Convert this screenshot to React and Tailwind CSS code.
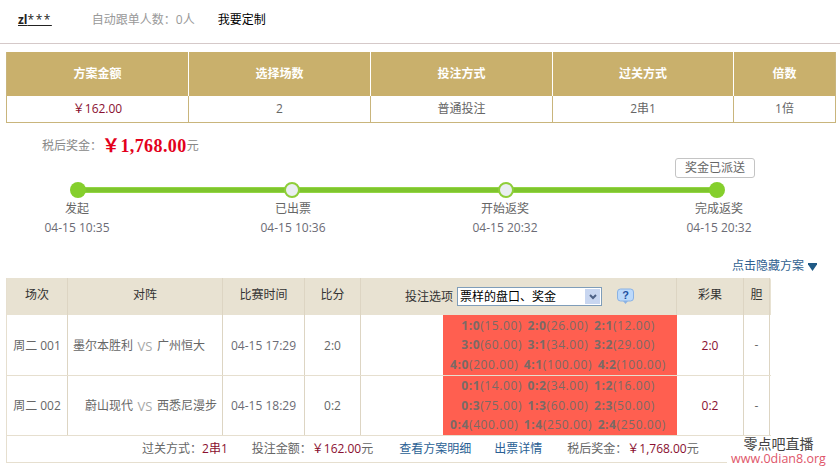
const F = "font-['Open_Sans','Noto_Sans_CJK_SC',sans-serif]";

function Step({ label, time, hollow, cls, labelCls }) {
  return (
    <div className={`flex flex-col items-center w-[72px] ${cls}`}>
      <div className={`w-4 h-4 rounded-full z-10 ${hollow ? 'bg-[#eaeef2] border-2 border-[#8fce3a]' : 'bg-[#85cf2c]'}`} />
      <div className={`text-[12px] leading-[16px] mt-[3px] text-[#666] whitespace-nowrap ${labelCls}`}>{label}</div>
      <div className={`text-[12px] leading-[16px] mt-[3px] text-[#6b6b75] whitespace-nowrap ${labelCls}`}>{time}</div>
    </div>
  );
}

const Odd = ({ k, v }) => (
  <span className="whitespace-nowrap"><b>{k}</b>({v})</span>
);

function Odds({ lines }) {
  return (
    <div className="bg-[#ff5f50] h-full flex flex-col justify-center items-center pr-[4px] text-[#7a6a66] text-[12px] leading-[19.5px] tracking-[0.6px]">
      {lines.map((l, i) => (
        <div key={i} className="flex gap-[5.5px]">
          {l.map(o => <Odd key={o[0]} k={o[0]} v={o[1]} />)}
        </div>
      ))}
    </div>
  );
}

const cols = "grid grid-cols-[61px_155px_82px_56px_82px_234px_67px_26px]";
const cellB = "border-r border-[#ddd5c3]";

function Row({ day, a, b, time, score, lines, h }) {
  return (
    <div className={`${cols} border-b border-[#e6dfcf] ${h} text-[12px] text-[#666]`}>
      <div className={`${cellB} flex items-center justify-center whitespace-nowrap pt-[1px]`}>{day}</div>
      <div className={`${cellB} flex items-center whitespace-nowrap pt-[1px]`}>
        <span className="w-[65px] text-right">{a}</span>
        <span className="text-[#a8a8a8] w-[24px] text-center text-[13px] pt-[2px]">VS</span>
        <span>{b}</span>
      </div>
      <div className={`${cellB} flex items-center justify-center text-[#6b6b75] pt-[1px]`}>{time}</div>
      <div className={`${cellB} flex items-center justify-center pt-[1px]`}>{score}</div>
      <div />
      <Odds lines={lines} />
      <div className={`${cellB} flex items-center justify-center text-[#8a1030] pt-[1px]`}>{score}</div>
      <div className={`${cellB} flex items-center justify-center`}>-</div>
    </div>
  );
}

export default function App() {
  return (
    <div className={`w-[840px] h-[472px] bg-white overflow-hidden relative ${F}`}>
      <div className="h-[44px] border-b border-[#d5c9c9] flex items-center text-[12px] pb-[3px]">
        <span className="ml-[18px] font-bold underline text-[#222]">zl<span className="font-normal tracking-[1.5px]">***</span></span>
        <span className="ml-[40px] text-[#999]">自动跟单人数：0人</span>
        <span className="ml-[23px] text-black">我要定制</span>
      </div>

      <div className="ml-[6px] mt-[8px] w-[830px] border-b border-r border-l border-[#c9b57c]">
        <div className="grid grid-cols-[182px_182px_182px_181px_101px] h-[44px] bg-[#c9b06c] text-white font-bold text-[12px]">
          {["方案金额", "选择场数", "投注方式", "过关方式", "倍数"].map((t, i) => (
            <div key={t} className={`flex items-center justify-center ${i < 4 ? 'border-r border-white' : ''}`}>{t}</div>
          ))}
        </div>
        <div className="grid grid-cols-[182px_182px_182px_181px_101px] h-[26px] text-[12px] text-[#666]">
          <div className="flex items-center justify-center border-r border-[#c9b57c] text-[#8a1030]">￥162.00</div>
          <div className="flex items-center justify-center border-r border-[#c9b57c]">2</div>
          <div className="flex items-center justify-center border-r border-[#c9b57c]">普通投注</div>
          <div className="flex items-center justify-center border-r border-[#c9b57c]">2串1</div>
          <div className="flex items-center justify-center">1倍</div>
        </div>
      </div>

      <div className="ml-[42px] mt-[12px] h-[22px] flex items-center text-[12px] text-[#888]">
        税后奖金：
        <span className="font-['Liberation_Serif','Noto_Sans_CJK_SC',serif] font-bold text-[18px] text-[#e3001b] leading-none tracking-[0.4px]">￥1,768.00</span>
        元
      </div>

      <div className="relative h-[66px] mt-[25px] ml-[42px] w-[711px]">
        <div className="absolute left-[36px] right-[36px] top-[5px] h-[6px] bg-[#7fc52e] border-y border-[#93d645]" />
        <div className="flex relative">
          <Step cls="mr-[142px]" labelCls="-ml-[2px]" label="发起" time="04-15 10:35" />
          <Step cls="mr-[142px]" labelCls="ml-[2px]" hollow label="已出票" time="04-15 10:36" />
          <Step cls="mr-[139px]" labelCls="-ml-[2px]" hollow label="开始返奖" time="04-15 20:32" />
          <Step cls="" labelCls="ml-[4px]" label="完成返奖" time="04-15 20:32" />
        </div>
      </div>
      <div className="absolute left-[675px] top-[158px] w-[80px] h-[20px] border border-[#c4c4c4] rounded-[3px] flex items-center justify-center text-[12px] text-[#666]">奖金已派送</div>

      <div className="h-[24px] mt-[6px] pr-[23px] flex items-center justify-end text-[12px] text-[#2f5f8f]">
        点击隐藏方案
        <svg width="9" height="8" viewBox="0 0 9 8" className="ml-[4px] mt-[2px]"><path d="M0 0h9v1.500L4.500 8 0 1.500z" fill="#1f5a85" /></svg>
      </div>

      <div className="ml-[6px] w-[830px]">
        <div className="w-[765px] border-l border-[#e6dfcf]">
          <div className={`${cols} h-[37px] bg-[#e8e2d2] text-[12px] text-[#333] rounded-tr-[2px]`}>
            <div className={`${cellB} flex items-center justify-center pb-[3px]`}>场次</div>
            <div className={`${cellB} flex items-center justify-center pb-[3px]`}>对阵</div>
            <div className={`${cellB} flex items-center justify-center pb-[3px]`}>比赛时间</div>
            <div className={`${cellB} flex items-center justify-center pb-[3px]`}>比分</div>
            <div className={`col-span-2 ${cellB} flex items-center pl-[44px]`}>
              投注选项
              <div className="ml-[4px] w-[145px] h-[19px] border border-[#7f9db9] bg-white flex items-center justify-between pl-[2px] pr-[1px] text-[12px] text-black">
                票样的盘口、奖金
                <span className="w-[15px] h-[15px] bg-[#c8d6f0] flex items-center justify-center">
                  <svg width="8" height="6" viewBox="0 0 8 6"><path d="M1 1l3 3 3-3" fill="none" stroke="#4d6185" strokeWidth="2" /></svg>
                </span>
              </div>
              <svg width="17" height="17" viewBox="0 0 17 17" className="ml-[15px]">
                <rect x="0.500" y="1" width="16" height="12" rx="3" fill="#bcd9fa" stroke="#8ab2e4" />
                <path d="M6 13h5l-2.500 3z" fill="#8ab2e4" />
                <text x="8.500" y="11" textAnchor="middle" fontSize="11" fontWeight="700" fill="#1e50a0" fontFamily="Liberation Sans">?</text>
              </svg>
            </div>
            <div className={`${cellB} flex items-center justify-center pb-[3px]`}>彩果</div>
            <div className={`${cellB} flex items-center justify-center pb-[3px]`}>胆</div>
          </div>
          <Row day="周二 001" a="墨尔本胜利" b="广州恒大" time="04-15 17:29" score="2:0" h="h-[61px]"
            lines={[[["1:0","15.00"],["2:0","26.00"],["2:1","12.00"]],[["3:0","60.00"],["3:1","34.00"],["3:2","29.00"]],[["4:0","200.00"],["4:1","100.00"],["4:2","100.00"]]]} />
          <Row day="周二 002" a="蔚山现代" b="西悉尼漫步" time="04-15 18:29" score="0:2" h="h-[60px]"
            lines={[[["0:1","14.00"],["0:2","34.00"],["1:2","16.00"]],[["0:3","75.00"],["1:3","60.00"],["2:3","50.00"]],[["0:4","400.00"],["1:4","250.00"],["2:4","250.00"]]]} />
        </div>
        <div className="h-[27px] border-x border-b border-[#e6dfcf] flex items-center text-[12px] text-[#666] pl-[135px]">
          过关方式：<span className="text-[#8a1030]">2串1</span>
          <span className="ml-[24px]">投注金额：<span className="text-[#8a1030]">￥162.00</span>元</span>
          <span className="ml-[26px] text-[#2a5f94]">查看方案明细</span>
          <span className="ml-[23px] text-[#2a5f94]">出票详情</span>
          <span className="ml-[25px]">税后奖金：<span className="text-[#8a1030]">￥1,768.00</span>元</span>
        </div>
      </div>

      <div className="absolute left-[727px] top-[436px] w-[113px] h-[34px] bg-white flex flex-col items-center pr-[10px]">
        <span className="text-[14px] leading-[16px] text-[#444]">零点吧直播</span>
        <span className="text-[12.5px] leading-[14px] text-[#e0566a] whitespace-nowrap">www.0dian8.org</span>
      </div>
    </div>
  );
}
